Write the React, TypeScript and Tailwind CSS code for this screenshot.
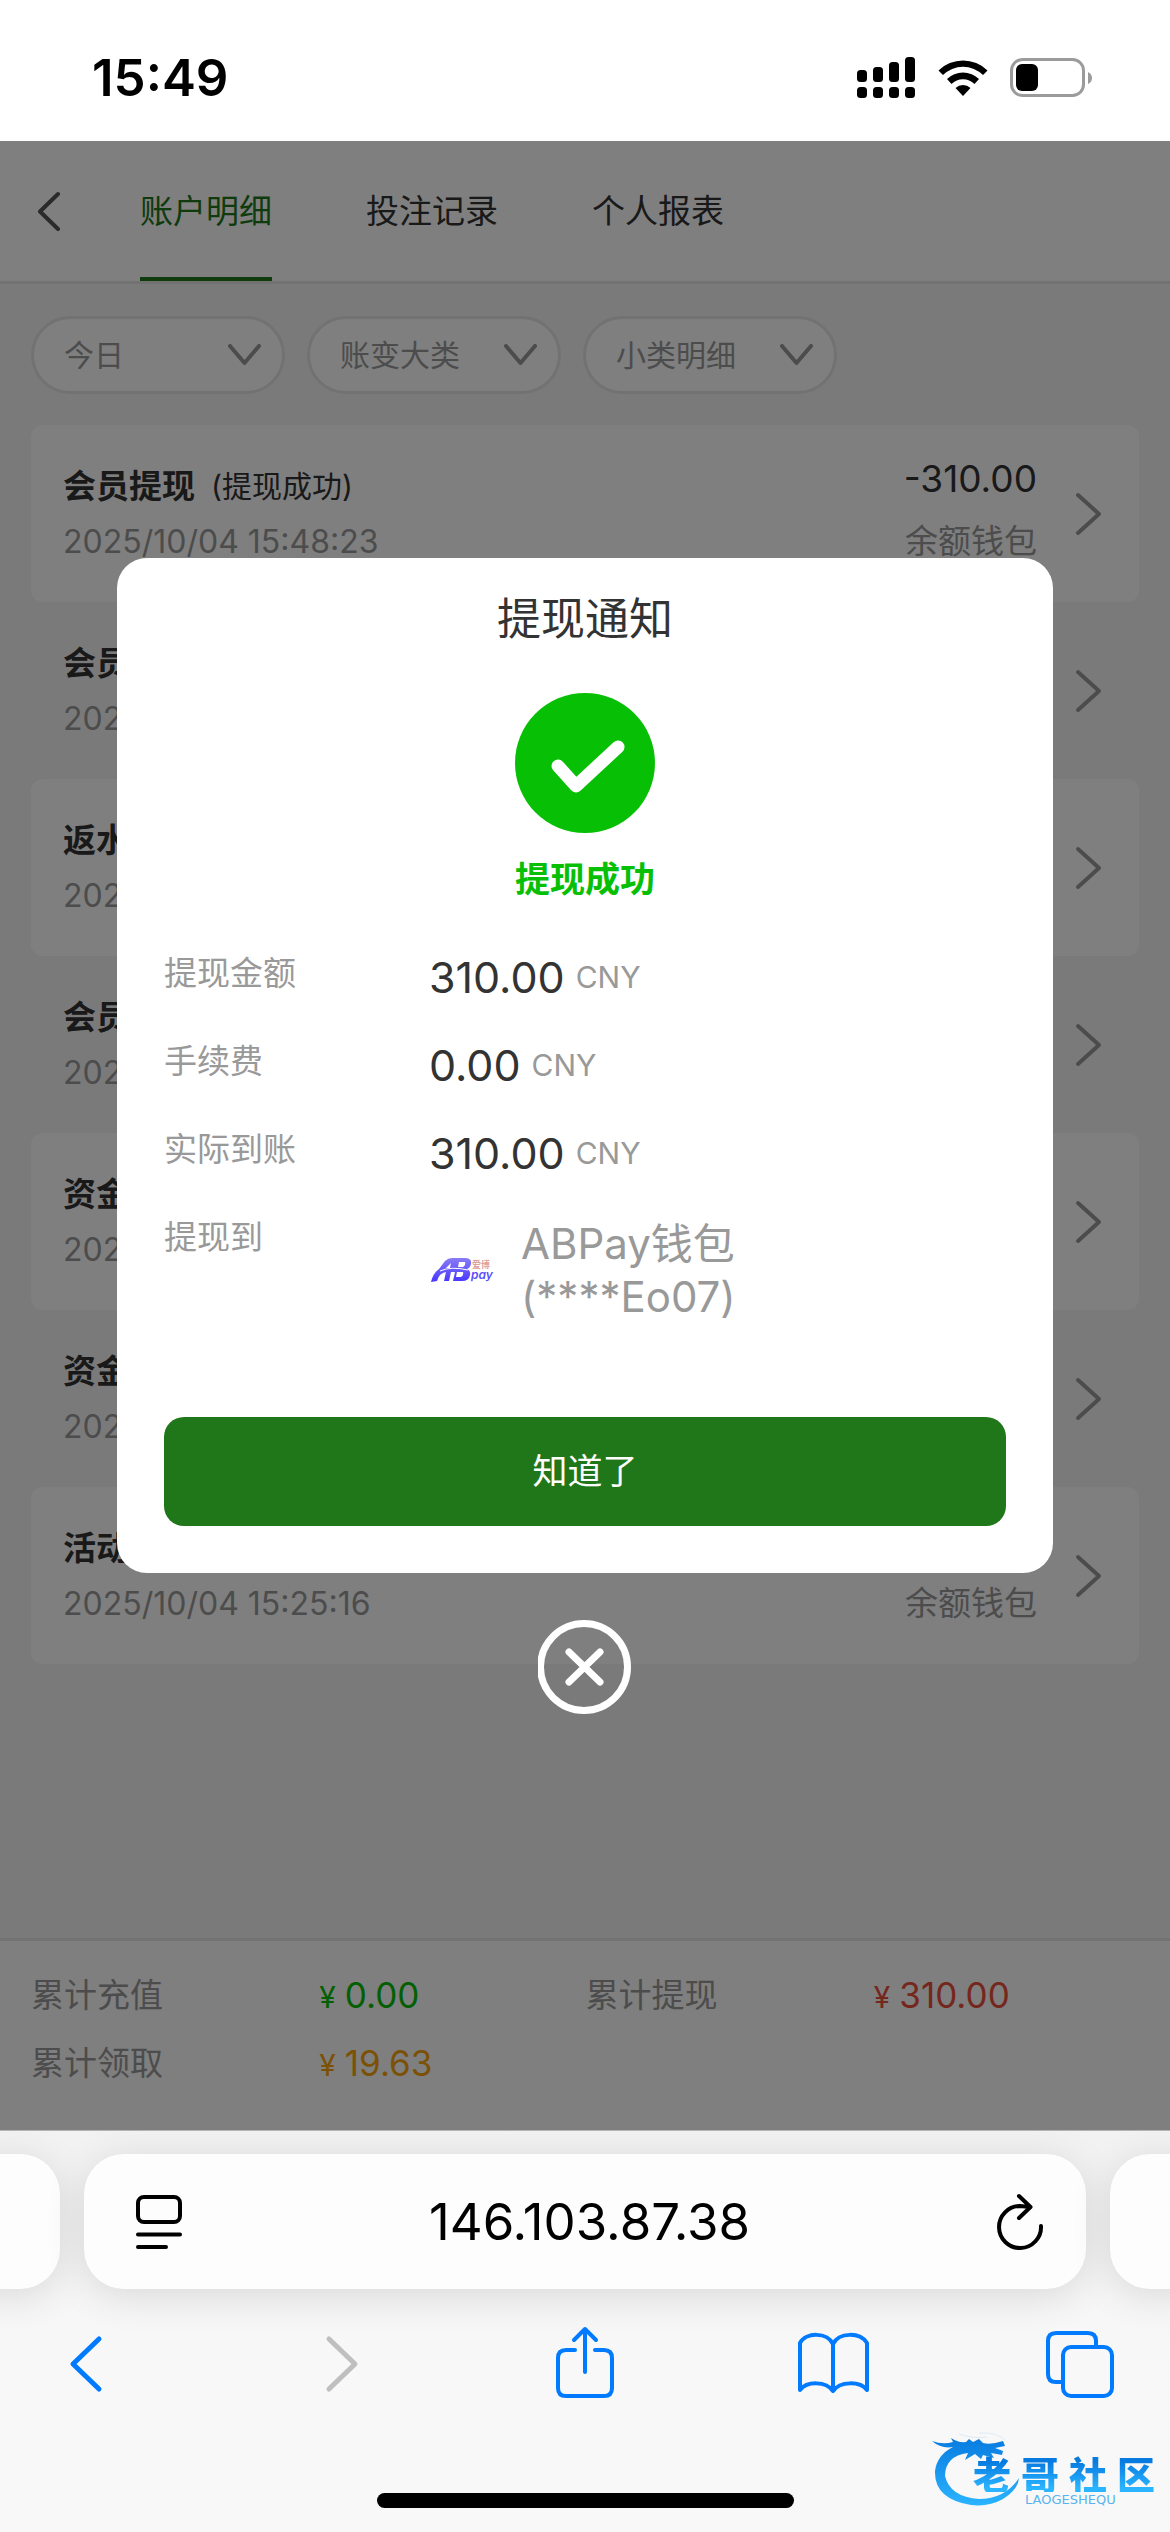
import React from "react";

type Entry = { title: string; note?: string; time: string; amount?: string; wallet?: string };

const entries: Entry[] = [
  { title: "会员提现", note: "(提现成功)", time: "2025/10/04 15:48:23", amount: "-310.00", wallet: "余额钱包" },
  { title: "会员", time: "2025" },
  { title: "返水", time: "2025" },
  { title: "会员", time: "2025" },
  { title: "资金", time: "2025" },
  { title: "资金", time: "2025" },
  { title: "活动", time: "2025/10/04 15:25:16", wallet: "余额钱包" },
];

const filters = [
  { id: "range", label: "今日" },
  { id: "category", label: "账变大类" },
  { id: "detail", label: "小类明细" },
];

const tabs = ["账户明细", "投注记录", "个人报表"];

const totals = [
  { label: "累计充值", value: "0.00", tone: "text-[#09be07]" },
  { label: "累计提现", value: "310.00", tone: "text-[#ea4e3d]" },
  { label: "累计领取", value: "19.63", tone: "text-[#f5a30a]" },
];

const amounts = [
  { label: "提现金额", value: "310.00" },
  { label: "手续费", value: "0.00" },
  { label: "实际到账", value: "310.00" },
];

function StatusBar() {
  return (
    <div className="flex h-[141px] items-center justify-between bg-white pt-[15px] pr-[77px] pl-[92px]">
      <span className="text-[51px] leading-[60px] font-semibold text-black">15:49</span>
      <div className="flex items-center gap-[22px]">
        <svg width="60" height="42" viewBox="0 0 60 42" aria-label="信号">
          <rect x="1" y="13" width="10" height="12" rx="3.5" />
          <rect x="17" y="10" width="10" height="15" rx="3.5" />
          <rect x="33" y="5" width="10" height="20" rx="3.5" />
          <rect x="49" y="0" width="10" height="25" rx="3.5" />
          <rect x="1" y="30" width="10" height="11" rx="3.5" />
          <rect x="17" y="30" width="10" height="11" rx="3.5" />
          <rect x="33" y="30" width="10" height="11" rx="3.5" />
          <rect x="49" y="30" width="10" height="11" rx="3.5" />
        </svg>
        <svg width="50" height="38" viewBox="0 0 50 38" aria-label="无线网络">
          <path d="M0.5 11.5 A35 35 0 0 1 49.5 11.5 L45 16 A28.500 28.500 0 0 0 5 16 Z" />
          <path d="M9 20 A23 23 0 0 1 41 20 L36.500 25 A16.500 16.500 0 0 0 13.500 25 Z" />
          <path d="M17.500 29 A11 11 0 0 1 32.500 29 L25 37 Z" />
        </svg>
        <svg width="83" height="40" viewBox="0 0 83 40" aria-label="电量">
          <rect x="1.500" y="1.500" width="72" height="36" rx="11" fill="none" stroke="#9b9b9b" strokeWidth="3" />
          <rect x="6" y="6" width="22" height="27" rx="6" />
          <path d="M78 14 Q82 16 82 20 Q82 24 78 26 Z" fill="#9b9b9b" />
        </svg>
      </div>
    </div>
  );
}

function Header() {
  return (
    <header className="flex h-[143px] items-stretch border-b-3 border-[#e4e4e4] bg-white pl-[37px]">
      <button type="button" aria-label="返回" className="mr-[79px] flex items-center">
        <svg width="24" height="40" viewBox="0 0 24 40" fill="none" stroke="#555" strokeWidth="4" strokeLinecap="round" strokeLinejoin="round">
          <path d="M21 3 L3 20.500 L21 38" />
        </svg>
      </button>
      <nav className="flex gap-[94px]">
        {tabs.map((t, i) => (
          <button
            key={t}
            type="button"
            className={
              i === 0
                ? "border-y-4 border-t-transparent border-b-[#1f771a] text-[33px] leading-[44px] text-[#1f771a]"
                : "border-y-4 border-transparent text-[33px] leading-[44px] text-[#333]"
            }
          >
            {t}
          </button>
        ))}
      </nav>
    </header>
  );
}

function Filters() {
  return (
    <div className="flex gap-[22px] px-[31px] pt-8 pb-[31px]">
      {filters.map((f) => (
        <div key={f.id} className="relative">
          <select
            aria-label={f.label}
            className="h-[78px] w-[254px] appearance-none rounded-full border-3 border-[#e4e4e4] bg-white pl-[30px] text-[30px] leading-[40px] text-[#999]"
          >
            <option>{f.label}</option>
          </select>
          <svg className="pointer-events-none absolute top-[28px] right-[24px]" width="33" height="22" viewBox="0 0 33 22" fill="none" stroke="#999" strokeWidth="4" strokeLinecap="round" strokeLinejoin="round">
            <path d="M2 2 L16.500 19 L31 2" />
          </svg>
        </div>
      ))}
    </div>
  );
}

function Row({ entry, raised }: { entry: Entry; raised: boolean }) {
  return (
    <li className={raised ? "flex h-[177px] items-center rounded-xl bg-white pr-[37px] pl-8" : "flex h-[177px] items-center pr-[37px] pl-8"}>
      <div className="flex-1">
        <div className="flex items-center gap-[16px] text-[#333]">
          <span className="text-[33px] leading-[56px] font-bold">{entry.title}</span>
          {entry.note && <span className="text-[30px] leading-[56px]">{entry.note}</span>}
        </div>
        <div className="text-[32px] leading-[56px] text-[#999]">{entry.time}</div>
      </div>
      <div className="mr-[38px] pb-[7px] text-right">
        <div className="h-[62px] text-[37px] leading-[62px] text-[#333]">{entry.amount}</div>
        <div className="h-[62px] text-[33px] leading-[62px] text-[#999]">{entry.wallet}</div>
      </div>
      <svg width="27" height="44" viewBox="0 0 27 44" fill="none" stroke="#999" strokeWidth="4" strokeLinecap="round" strokeLinejoin="round">
        <path d="M3 3 L24 22 L3 41" />
      </svg>
    </li>
  );
}

function Totals() {
  return (
    <dl className="grid auto-rows-[68px] grid-cols-2 border-t-3 border-[#e4e4e4] bg-white pt-[20px] pr-[30px] pb-[33px] pl-[31px]">
      {totals.map((t) => (
        <div key={t.label} className="grid grid-cols-[52%_1fr] leading-[68px]">
          <dt className="text-[33px] text-[#999]">{t.label}</dt>
          <dd className={t.tone}>
            <span className="flex items-baseline gap-[9px]">
              <span className="text-[30px]">¥</span>
              <span className="text-[35px]">{t.value}</span>
            </span>
          </dd>
        </div>
      ))}
    </dl>
  );
}

function WalletLogo() {
  return (
    <svg width="64" height="26" viewBox="0 0 64 26" aria-label="ABPay">
      <defs>
        <linearGradient id="ab" x1="0" y1="0" x2="0" y2="1">
          <stop offset="0" stopColor="#8a7cf5" />
          <stop offset="1" stopColor="#4636ff" />
        </linearGradient>
      </defs>
      <path
        fill="url(#ab)"
        fillRule="evenodd"
        d="M0 25 Q2 16 8 12 L14 4 Q17 1 21 1 H34 Q41 1 40 7 Q39 11 36 12 Q40 14 39 18 Q38 24 31 24 H22 L24 15 H20 L18 24 H13 L15 15 Q8 16 6 24 Z M20 6 L15 11 H19 L20 6 Z M28 5 L27 10 H32 Q35 8 34 5 Z M26 15 L25 20 H30 Q33 18 32 15 Z"
      />
      <path d="M9 14 Q20 9 37 13" stroke="#fff" strokeWidth="1" fill="none" />
      <text x="41" y="11" fontSize="9" fontWeight="700" fill="#e0a09a">爱博</text>
      <text x="40" y="22" fontSize="12" fontWeight="600" fontStyle="italic" fill="#5a4cff">pay</text>
    </svg>
  );
}

function Notice() {
  return (
    <div className="absolute inset-0 flex flex-col items-center justify-center gap-[47px] bg-black/50">
      <section role="dialog" aria-modal="true" aria-labelledby="notice-title" className="w-4/5 rounded-[30px] bg-white px-[47px] pt-[31px] pb-[47px]">
        <h2 id="notice-title" className="text-center text-[44px] leading-[60px] text-[#333]">提现通知</h2>
        <svg className="mx-auto mt-[44px]" width="140" height="140" viewBox="0 0 140 140" aria-hidden="true">
          <circle cx="70" cy="70" r="70" fill="#07c005" />
          <path d="M43 73 L61 93 L103 54" fill="none" stroke="#fff" strokeWidth="13" strokeLinecap="round" strokeLinejoin="round" />
        </svg>
        <p className="mt-[20px] text-center text-[35px] leading-[52px] font-bold text-[#07c005]">提现成功</p>
        <dl className="mt-[24px]">
          {amounts.map((a) => (
            <div key={a.label} className="flex h-[88px]">
              <dt className="w-[265px] text-[33px] leading-[88px] text-[#999]">{a.label}</dt>
              <dd className="flex items-center gap-[11px] pt-[8px]">
                <span className="text-[43px] leading-[80px] text-[#333]">{a.value}</span>
                <span className="text-[30px] leading-[80px] text-[#999]">CNY</span>
              </dd>
            </div>
          ))}
          <div className="flex">
            <dt className="w-[267px] text-[33px] leading-[88px] text-[#999]">提现到</dt>
            <dd className="flex items-center gap-[26px] pt-[24px] text-[#999]">
              <WalletLogo />
              <span className="text-[42px] leading-[53px]">
                ABPay钱包
                <br />
                (****Eo07)
              </span>
            </dd>
          </div>
        </dl>
        <button type="button" className="mt-[94px] h-[109px] w-full rounded-[20px] bg-[#1f771a] text-[35px] leading-[52px] text-white">
          知道了
        </button>
      </section>
      <button type="button" aria-label="关闭">
        <svg width="94" height="94" viewBox="0 0 94 94" fill="none" stroke="#fff" strokeWidth="7" strokeLinecap="round">
          <circle cx="46" cy="47" r="43.500" />
          <path d="M31 32 L62 62 M62 32 L31 62" />
        </svg>
      </button>
    </div>
  );
}

function Watermark() {
  return (
    <div className="absolute right-[15px] bottom-[24px] flex h-[78px] w-[224px] items-end">
      <svg className="absolute inset-0" width="96" height="78" viewBox="0 0 96 78" aria-hidden="true">
        <defs>
          <linearGradient id="wm" x1="0" y1="0" x2="0" y2="1">
            <stop offset="0" stopColor="#087be0" />
            <stop offset="1" stopColor="#2bb4ff" />
          </linearGradient>
        </defs>
        <path
          fill="url(#wm)"
          d="M1 11 Q12 15 22 12 L20 8 Q27 13 35 12 L38 9 L42 12 L48 9 L52 13 Q60 15 72 11 L74 16 L64 18 L72 21 L71 25 L60 23 L63 28 L52 25 L50 29 L44 24 L34 30 L37 23 Q14 26 14 46 Q19 67 48 69 Q74 69 88 48 Q87 60 72 69 Q58 77 40 75 Q3 69 4 41 Q6 25 22 17 Q10 19 1 11 Z"
        />
        <path d="M28 4 Q42 9 56 7 M48 3 Q66 2 74 10" stroke="#dcecf8" strokeWidth="1" fill="none" />
      </svg>
      <div className="relative ml-auto flex w-[182px] flex-col gap-[3px] pb-[3px]">
        <span className="flex justify-between bg-linear-to-b from-[#087be0] from-20% to-[#2bb4ff] to-90% bg-clip-text font-['Noto_Sans_CJK_SC'] text-[38px] leading-[38px] font-black text-transparent">
          {["老", "哥", "社", "区"].map((c) => (
            <span key={c}>{c}</span>
          ))}
        </span>
        <span className="pl-[52px] font-['DejaVu_Sans'] text-[13px] leading-[10px] text-[#58b4ee]">LAOGESHEQU</span>
      </div>
    </div>
  );
}

function BrowserBar() {
  const blue = "#007aff";
  return (
    <footer className="relative overflow-hidden border-t border-[#b4b4b4] bg-linear-to-b from-[#f2f2f2] to-[#f8f8f8] to-60%">
      <div className="-mx-[40px] flex h-[182px] gap-[24px] pt-[23px] pb-[24px]">
        <div className="w-[100px] shrink-0 rounded-[40px] bg-[#fdfdfd] shadow-[0_6px_40px_rgba(0,0,0,0.12)]" />
        <div className="flex flex-1 items-center justify-between rounded-[40px] bg-[#fdfdfd] pr-[41px] pl-[50px] shadow-[0_6px_40px_rgba(0,0,0,0.12)]">
          <button type="button" aria-label="页面设置">
            <svg width="50" height="56" viewBox="0 0 50 56" fill="none" stroke="#000" strokeWidth="4" strokeLinecap="round">
              <rect x="4" y="3" width="42" height="25" rx="6" />
              <path d="M4 40.500 H46 M4 53 H32" />
            </svg>
          </button>
          <span className="text-[51px] leading-[60px] text-black">146.103.87.38</span>
          <button type="button" aria-label="重新载入">
            <svg width="50" height="58" viewBox="0 0 50 58" fill="none" stroke="#000" strokeWidth="4" strokeLinecap="round" strokeLinejoin="round">
              <path d="M46 33 A21 21 0 1 1 25 13 L35 14 M24 3 L35.500 14 L24 25" />
            </svg>
          </button>
        </div>
        <div className="w-[100px] shrink-0 rounded-[40px] bg-[#fdfdfd] shadow-[0_6px_40px_rgba(0,0,0,0.12)]" />
      </div>
      <nav className="flex justify-between px-[44px] pt-[6px]">
        <button type="button" aria-label="后退">
          <svg width="84" height="90" viewBox="0 0 84 90" fill="none" stroke={blue} strokeWidth="5" strokeLinecap="round" strokeLinejoin="round">
            <path d="M55 20 L29 45 L55 70" />
          </svg>
        </button>
        <button type="button" aria-label="前进" disabled>
          <svg width="84" height="90" viewBox="0 0 84 90" fill="none" stroke="#bfbfbf" strokeWidth="5" strokeLinecap="round" strokeLinejoin="round">
            <path d="M35 20 L61 45 L35 70" />
          </svg>
        </button>
        <button type="button" aria-label="分享">
          <svg width="84" height="90" viewBox="0 0 84 90" fill="none" stroke={blue} strokeWidth="4" strokeLinecap="round" strokeLinejoin="round">
            <path d="M32 31 H23 Q15 31 15 39 V69 Q15 77 23 77 H61 Q69 77 69 69 V39 Q69 31 61 31 H52 M42 53 V10 M31 21 L42 10 L53 21" />
          </svg>
        </button>
        <button type="button" aria-label="书签">
          <svg width="84" height="90" viewBox="0 0 84 90" fill="none" stroke={blue} strokeWidth="4" strokeLinecap="round" strokeLinejoin="round">
            <path d="M40 25 C34 13 13 13 7 24 V71 C14 62 33 62 40 72 C47 62 67 62 74 71 V24 C67 13 46 13 40 25 V72" />
          </svg>
        </button>
        <button type="button" aria-label="标签页">
          <svg width="84" height="90" viewBox="0 0 84 90" fill="none" stroke={blue} strokeWidth="4" strokeLinecap="round" strokeLinejoin="round">
            <path d="M20 63 H14 Q6 63 6 55 V22 Q6 14 14 14 H46 Q54 14 54 22 V27" />
            <rect x="21" y="28" width="49" height="49" rx="8" />
          </svg>
        </button>
      </nav>
      <div className="mx-auto mt-[84px] mb-[24px] h-[15px] w-[417px] rounded-full bg-black" />
      <Watermark />
    </footer>
  );
}

export default function App() {
  return (
    <div className="flex min-h-screen flex-col bg-white font-['Inter','Noto_Sans_CJK_SC',sans-serif]">
      <StatusBar />
      <main className="relative flex flex-1 flex-col bg-[#f5f5f5]">
        <Header />
        <Filters />
        <ul className="flex-1 px-[31px]">
          {entries.map((e, i) => (
            <Row key={i} entry={e} raised={i % 2 === 0} />
          ))}
        </ul>
        <Totals />
        <Notice />
      </main>
      <BrowserBar />
    </div>
  );
}
